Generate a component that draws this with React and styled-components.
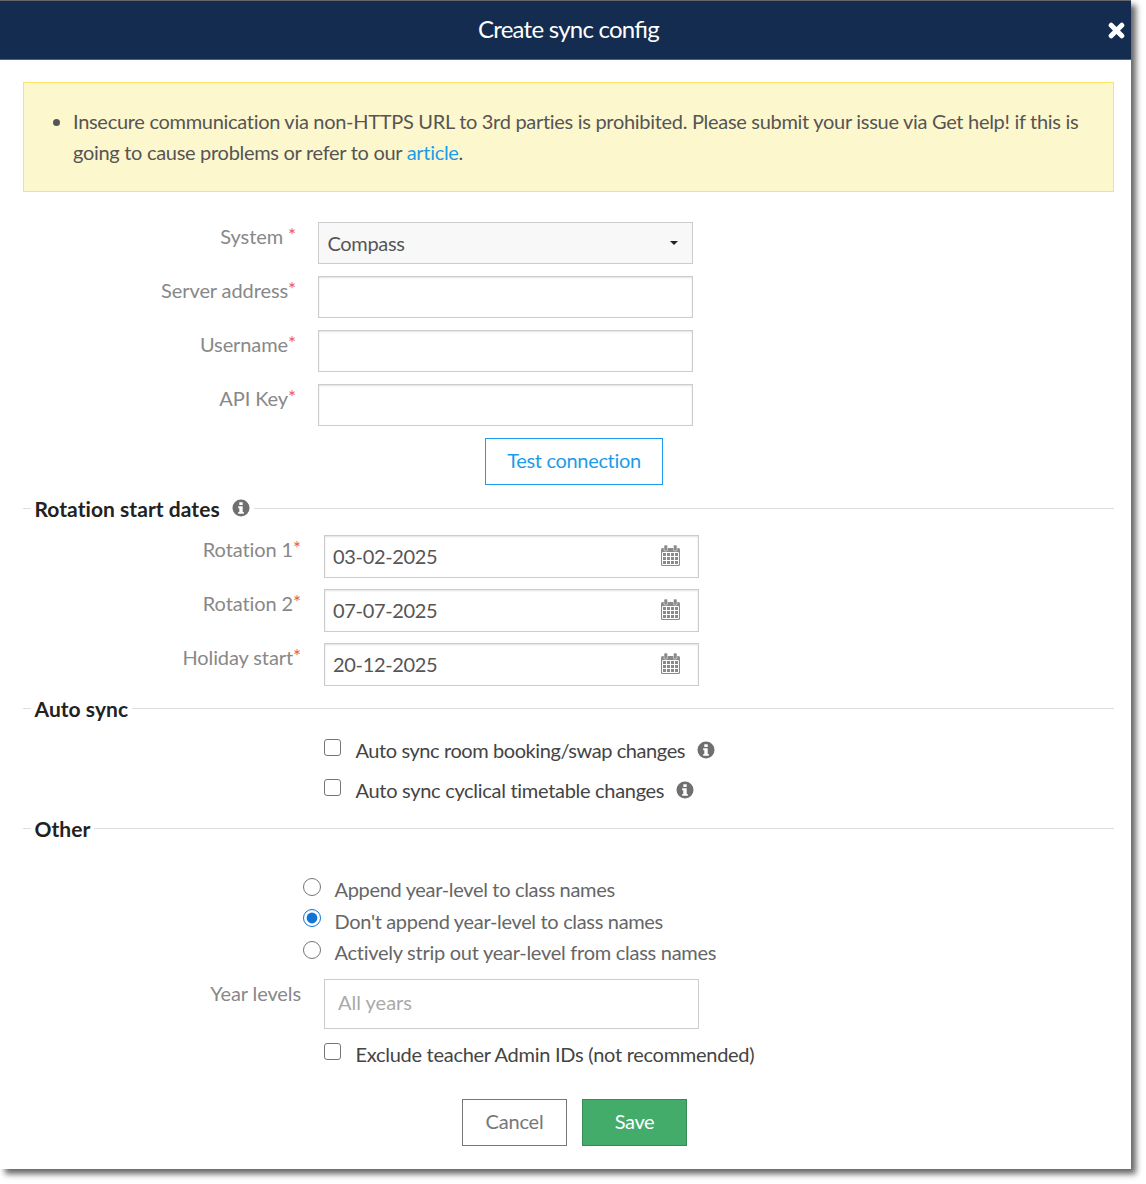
import React from "react";
import styled, { createGlobalStyle } from "styled-components";

const GlobalStyle = createGlobalStyle`
  html, body {
    margin: 0;
    padding: 0;
    background: #fff;
  }
  body {
    font-family: Lato, "Open Sans", sans-serif;
    font-size: 20px;
    letter-spacing: -0.33px;
    color: #555;
  }
  * {
    box-sizing: border-box;
  }
`;

function CalendarIcon() {
  return (
    <CalendarSvg width="19" height="21" viewBox="0 0 19 21" fill="none">
      <rect x="0" y="3" width="19" height="18" rx="1.500" fill="#8a8a8a" />
      <rect x="3" y="0" width="3.500" height="6" rx="1.200" fill="#8a8a8a" stroke="#fff" strokeWidth="0.500" />
      <rect x="12.500" y="0" width="3.500" height="6" rx="1.200" fill="#8a8a8a" stroke="#fff" strokeWidth="0.500" />
      <path
        d="M1.500 7.500h16v12h-16zM1.500 11.500h16M1.500 15.500h16M5.500 7.500v12M9.500 7.500v12M13.500 7.500v12"
        stroke="#fff"
        strokeWidth="1"
      />
    </CalendarSvg>
  );
}

function InfoGlyph() {
  return (
    <InfoIcon width="18" height="18" viewBox="0 0 18 18">
      <path
        fillRule="evenodd"
        d="M9 .5a8.500 8.500 0 1 1 0 17a8.500 8.500 0 0 1 0-17zM7.300 3.200v2.700h3.400V3.200zM6.200 7.300v1.900h1.100v3.700H6.200v1.900h5.600v-1.900h-1.100V7.300z"
        fill="#6f6f6f"
      />
    </InfoIcon>
  );
}

function Required() {
  return <Star>*</Star>;
}

export default function App() {
  return (
    <Page>
      <GlobalStyle />
      <Modal>
        <Header>
          <Title>Create sync config</Title>
          <Close aria-label="Close">
            <svg width="17" height="17" viewBox="0 0 17 17">
              <path d="M3.200 3.200l10.600 10.600M13.800 3.200L3.200 13.800" stroke="#fff" strokeWidth="5" strokeLinecap="round" />
            </svg>
          </Close>
        </Header>

        <Body>
          <Alert>
            <ul>
              <li>
                Insecure communication via non-HTTPS URL to 3rd parties is prohibited. Please submit your
                issue via Get help! if this is going to cause problems or refer to our <a href="#article">article</a>.
              </li>
            </ul>
          </Alert>

          <ServerFields>
            <Field>
              <Label>
                System <Required />
              </Label>
              <SelectWrap>
                <Select defaultValue="Compass">
                  <option>Compass</option>
                </Select>
                <Caret />
              </SelectWrap>
            </Field>
            <Field>
              <Label>
                Server address
                <Required />
              </Label>
              <TextInput />
            </Field>
            <Field>
              <Label>
                Username
                <Required />
              </Label>
              <TextInput />
            </Field>
            <Field>
              <Label>
                API Key
                <Required />
              </Label>
              <TextInput />
            </Field>
            <TestRow>
              <TestButton>Test connection</TestButton>
            </TestRow>
          </ServerFields>

          <SectionHeading>
            <span>Rotation start dates</span>
            <InfoGlyph />
          </SectionHeading>
          <DateFields>
            {[
              ["Rotation 1", "03-02-2025"],
              ["Rotation 2", "07-07-2025"],
              ["Holiday start", "20-12-2025"],
            ].map(([label, value]) => (
              <Field key={label} $wide>
                <Label $wide>
                  {label}
                  <Required />
                </Label>
                <DateBox>
                  <DateInput defaultValue={value} />
                  <CalendarIcon />
                </DateBox>
              </Field>
            ))}
          </DateFields>

          <SectionHeading $top="10px">
            <span>Auto sync</span>
          </SectionHeading>
          <CheckRows>
            <CheckRow $spacing="-0.42px">
              <Checkbox type="checkbox" />
              <span>Auto sync room booking/swap changes</span>
              <InfoGlyph />
            </CheckRow>
            <CheckRow $spacing="-0.3px">
              <Checkbox type="checkbox" />
              <span>Auto sync cyclical timetable changes</span>
              <InfoGlyph />
            </CheckRow>
          </CheckRows>

          <SectionHeading $top="6px">
            <span>Other</span>
          </SectionHeading>
          <RadioGroup>
            <RadioRow>
              <Radio type="radio" name="year-level" />
              <span>Append year-level to class names</span>
            </RadioRow>
            <RadioRow>
              <Radio type="radio" name="year-level" defaultChecked />
              <span>Don't append year-level to class names</span>
            </RadioRow>
            <RadioRow $spacing="-0.27px">
              <Radio type="radio" name="year-level" />
              <span>Actively strip out year-level from class names</span>
            </RadioRow>
          </RadioGroup>

          <YearField>
            <Label $wide>Year levels</Label>
            <YearInput placeholder="All years" />
          </YearField>

          <ExcludeRow $spacing="-0.28px">
            <Checkbox type="checkbox" />
            <span>Exclude teacher Admin IDs (not recommended)</span>
          </ExcludeRow>

          <Footer>
            <CancelButton>Cancel</CancelButton>
            <SaveButton>Save</SaveButton>
          </Footer>
        </Body>
      </Modal>
    </Page>
  );
}

const Page = styled.div`
  min-height: 1184px;
`;

const Modal = styled.div`
  width: 1131px;
  height: 1169px;
  background: #fff;
  box-shadow: 5px 5px 6px rgba(0, 0, 0, 0.6);
`;

const Header = styled.header`
  position: relative;
  height: 60px;
  background: #132c50;
  border-top: 1px solid #666;
  border-bottom: 1px solid #55647a;
  display: flex;
  align-items: center;
  justify-content: center;
  padding: 0 0 4px 6px;
`;

const Title = styled.h1`
  margin: 0;
  font-size: 24px;
  font-weight: 400;
  color: #fff;
  letter-spacing: -0.75px;
  font-feature-settings: "liga";
`;

const Close = styled.button`
  position: absolute;
  right: 6px;
  top: 21px;
  padding: 0;
  border: 0;
  background: none;
  line-height: 1;
  display: flex;
`;

const Body = styled.div`
  padding: 22px 17px 0 23px;
`;

const Alert = styled.div`
  height: 110px;
  background: #fdf7cd;
  border: 1px solid #fbe36a;
  padding: 23px 30px 0 0;
  line-height: 31px;
  letter-spacing: -0.3px;
  ul {
    margin: 0;
    padding-left: 49px;
  }
  a {
    color: #1b9bea;
    text-decoration: none;
  }
`;

const ServerFields = styled.div`
  margin-top: 30px;
`;

const DateFields = styled.div`
  margin-top: 15px;
`;

const Field = styled.div`
  display: flex;
  gap: ${(p) => (p.$wide ? "23px" : "22px")};
  margin-bottom: ${(p) => (p.$wide ? "11px" : "12px")};
  &:last-child {
    margin-bottom: 0;
  }
`;

const Label = styled.label`
  width: ${(p) => (p.$wide ? "278px" : "273px")};
  flex: none;
  text-align: right;
  color: #888;
  line-height: 29px;
  letter-spacing: -0.1px;
`;

const Star = styled.span`
  color: #ef5a4c;
  font-size: 19px;
  line-height: 0;
  vertical-align: 2px;
`;

const SelectWrap = styled.div`
  position: relative;
  width: 375px;
  height: 42px;
`;

const Select = styled.select`
  width: 100%;
  height: 100%;
  appearance: none;
  background: #f8f8f8;
  border: 1px solid #ccc;
  border-radius: 0;
  padding: 0 8.500px;
  font: inherit;
  letter-spacing: inherit;
  color: #555;
`;

const Caret = styled.span`
  position: absolute;
  right: 15px;
  top: 19px;
  border-left: 4.500px solid transparent;
  border-right: 4.500px solid transparent;
  border-top: 4.500px solid #222;
  pointer-events: none;
`;

const TextInput = styled.input`
  width: 375px;
  height: 42px;
  border: 1px solid #ccc;
  box-shadow: inset 0 1px 2px rgba(0, 0, 0, 0.12);
  padding: 0 9px;
  font: inherit;
  color: #555;
`;

const TestRow = styled.div`
  display: flex;
  padding-left: 462px;
`;

const TestButton = styled.button`
  width: 178px;
  height: 47px;
  background: #fff;
  border: 1px solid #1b9bea;
  color: #1b9bea;
  font: inherit;
  letter-spacing: inherit;
  padding: 0 0 3px;
`;

const SectionHeading = styled.div`
  display: flex;
  align-items: center;
  height: 24px;
  margin-top: ${(p) => p.$top || "11px"};
  font-size: 21px;
  font-weight: 700;
  letter-spacing: 0.05px;
  color: #222;
  &::before {
    content: "";
    width: 8px;
    height: 1px;
    background: #ddd;
    margin-right: 3.500px;
  }
  &::after {
    content: "";
    flex: 1;
    height: 1px;
    background: #ddd;
    margin-left: 4px;
  }
`;

const InfoIcon = styled.svg`
  flex: none;
  margin-left: 12px;
`;

const CalendarSvg = styled.svg`
  flex: none;
  margin-bottom: 1px;
`;

const DateBox = styled.div`
  width: 375px;
  height: 43px;
  display: flex;
  align-items: center;
  padding: 0 18px 1px 0;
  border: 1px solid #ccc;
  box-shadow: inset 0 1px 2px rgba(0, 0, 0, 0.12);
`;

const DateInput = styled.input`
  flex: 1;
  min-width: 0;
  border: 0;
  outline: 0;
  background: none;
  padding: 0 8px;
  font: inherit;
  letter-spacing: inherit;
  color: #555;
`;

const CheckRows = styled.div`
  margin-top: 10px;
  padding-left: 301px;
`;

const CheckRow = styled.label`
  display: flex;
  align-items: center;
  height: 40px;
  color: #444;
  letter-spacing: ${(p) => p.$spacing || "inherit"};
`;

const Checkbox = styled.input`
  appearance: none;
  width: 17px;
  height: 17px;
  flex: none;
  margin: -6px 14.500px 0 0;
  background: #fff;
  border: 1.500px solid #767676;
  border-radius: 3px;
`;

const RadioGroup = styled.div`
  margin-top: 34px;
  padding-left: 280px;
`;

const RadioRow = styled.label`
  display: flex;
  align-items: center;
  height: 31.500px;
  padding-bottom: 1px;
  color: #666;
  letter-spacing: ${(p) => p.$spacing || "inherit"};
`;

const Radio = styled.input`
  width: 18px;
  height: 18px;
  flex: none;
  margin: -5px 13.500px 0 0;
  accent-color: #0f75d6;
`;

const YearField = styled.div`
  display: flex;
  gap: 23px;
  margin-top: 10.500px;
`;

const YearInput = styled.input`
  width: 375px;
  height: 50px;
  border: 1px solid #ccc;
  padding: 0 13px 5px;
  font: inherit;
  letter-spacing: 0;
  color: #555;
  &::placeholder {
    color: #aaa;
    opacity: 1;
  }
`;

const ExcludeRow = styled(CheckRow)`
  margin-top: 5px;
  padding-left: 301px;
`;

const Footer = styled.div`
  display: flex;
  gap: 15px;
  margin-top: 25px;
  padding-left: 439px;
`;

const CancelButton = styled.button`
  width: 105px;
  height: 47px;
  background: #fff;
  border: 1px solid #777;
  color: #777;
  font: inherit;
  letter-spacing: -0.2px;
  padding: 0 0 4px;
`;

const SaveButton = styled.button`
  width: 105px;
  height: 47px;
  background: #43ac6a;
  border: 1px solid #368a55;
  color: #fff;
  font: inherit;
  letter-spacing: inherit;
  padding: 0 0 4px;
`;
